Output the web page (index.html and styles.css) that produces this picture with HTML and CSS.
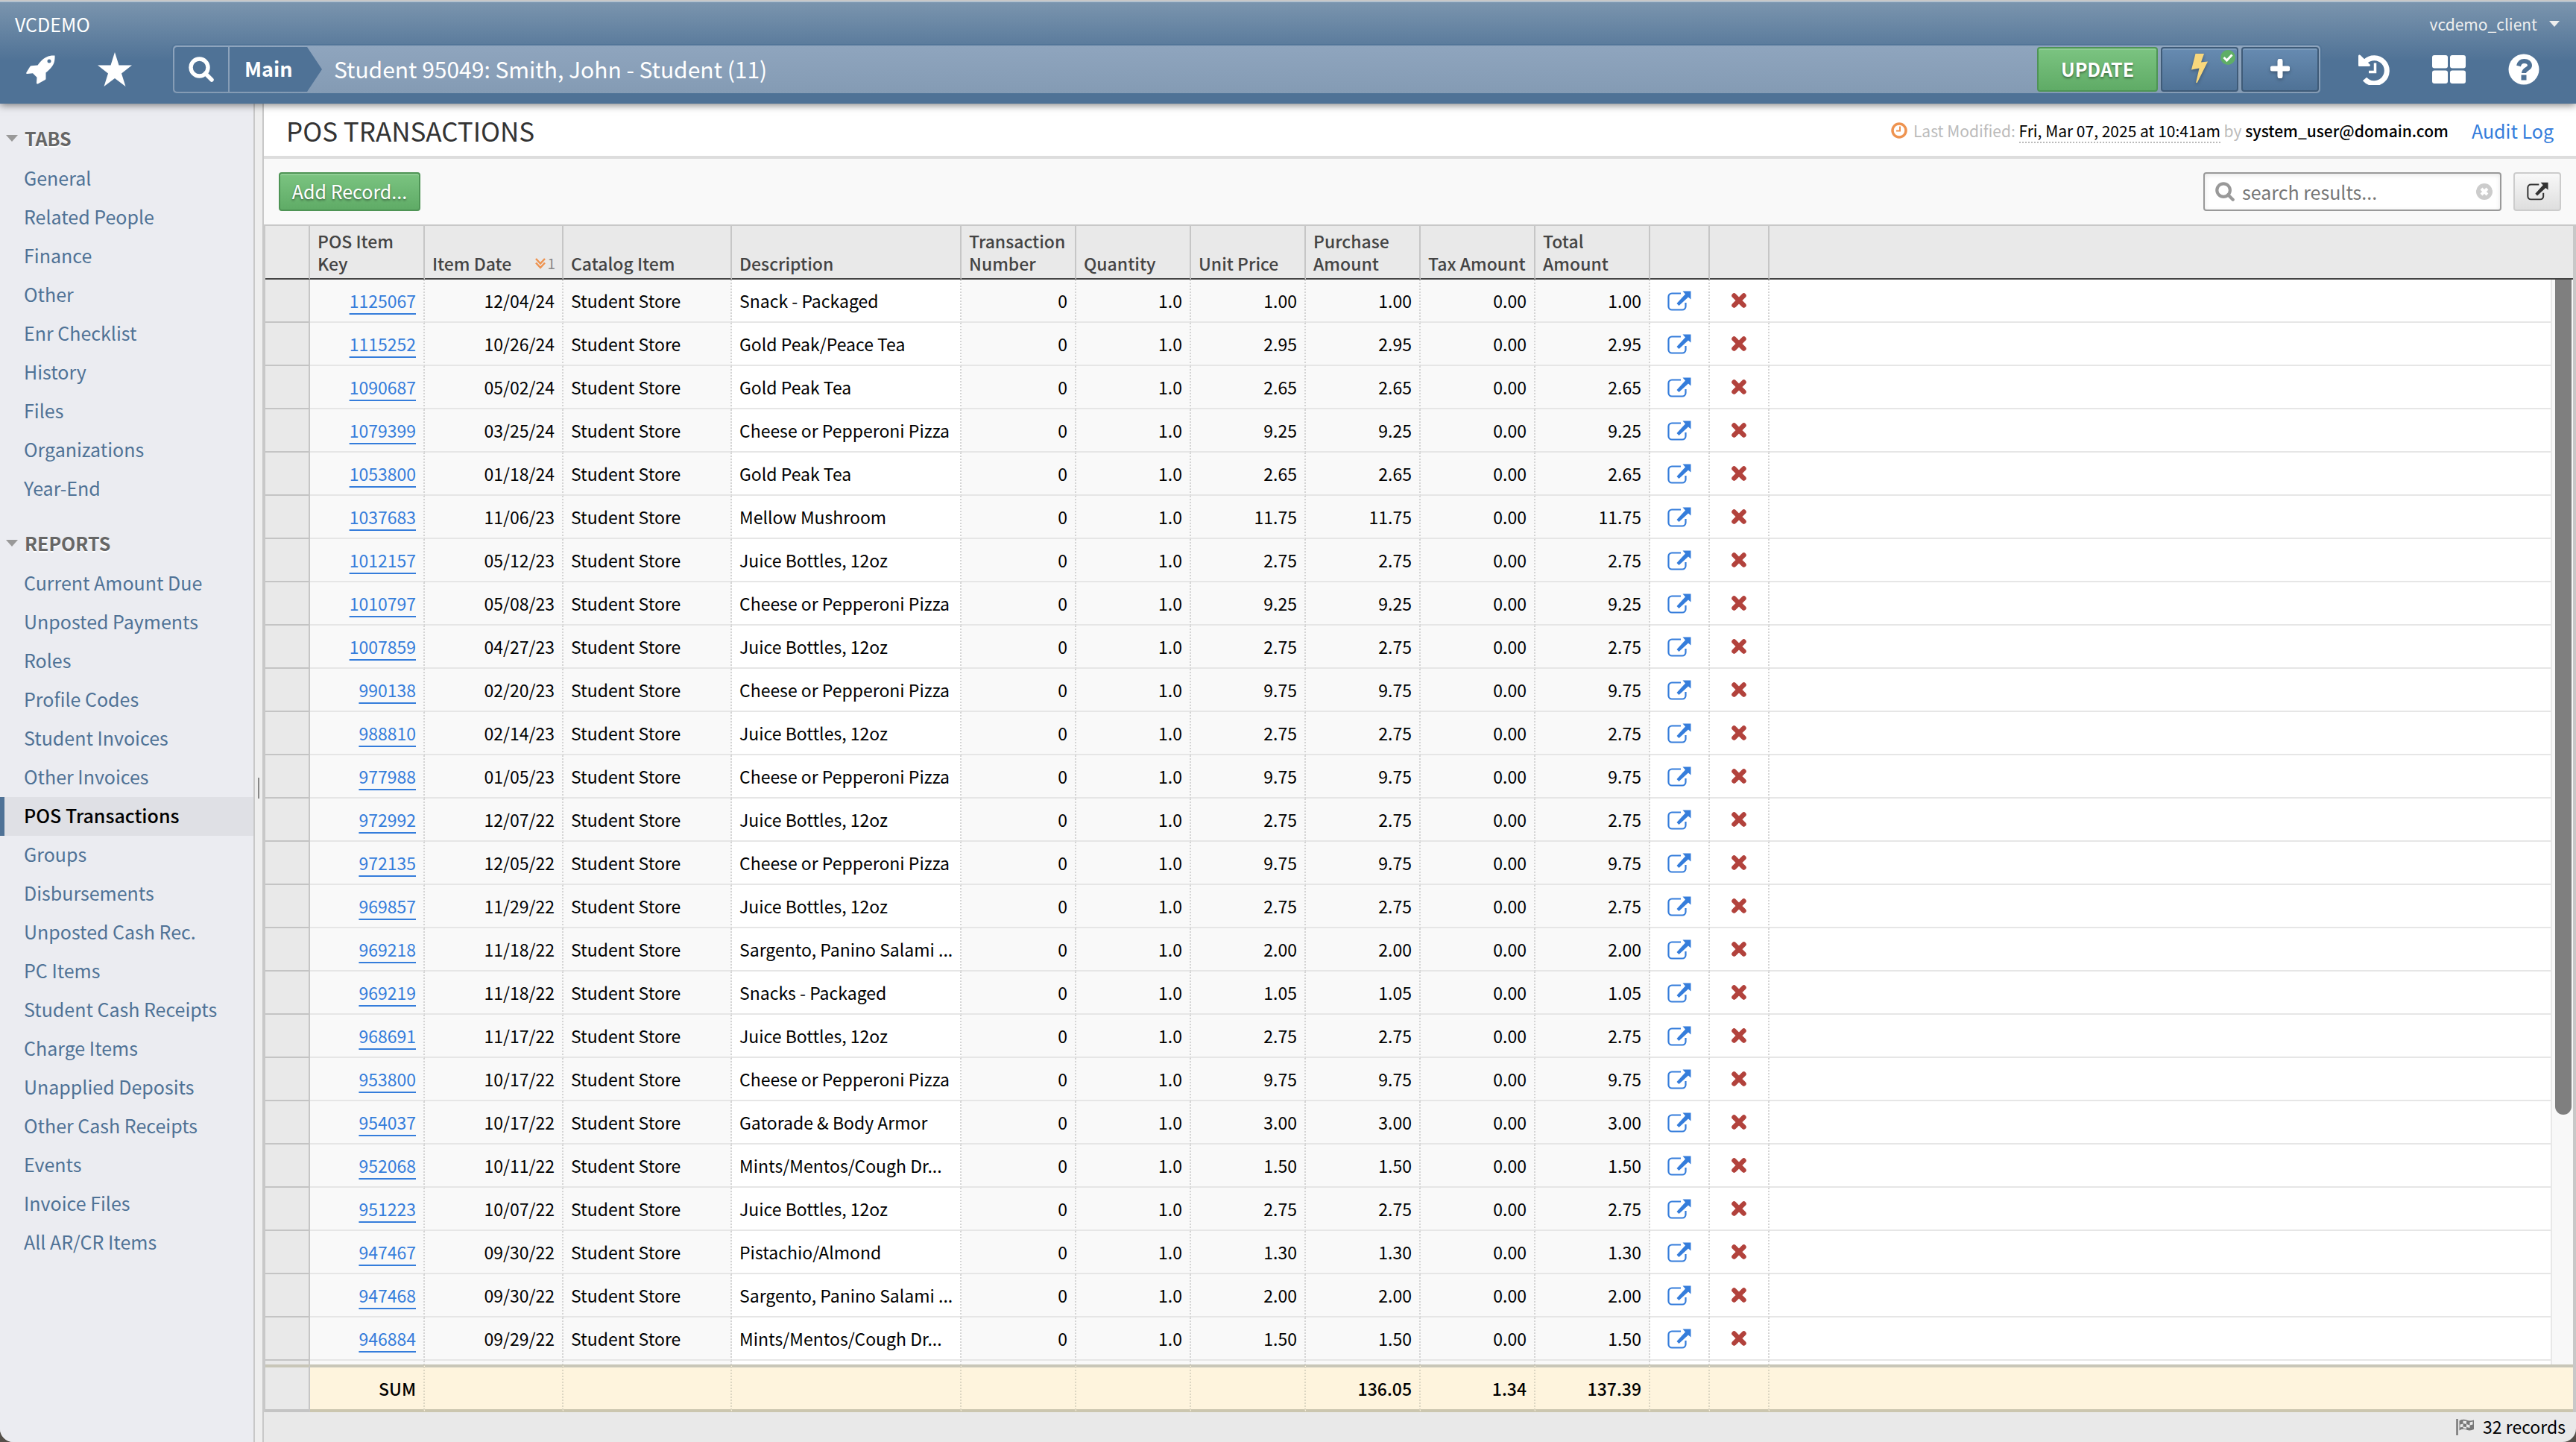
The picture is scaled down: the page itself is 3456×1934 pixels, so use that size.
FILE: index.html
```html
<!DOCTYPE html>
<html lang="en">
<head>
  <meta charset="UTF-8">
  <meta name="viewport" content="width=device-width, initial-scale=1.0">
  <title>POS Transactions - VCDEMO</title>
  <link rel="stylesheet" href="styles.css">
</head>
<body>
  <svg class="sprite" aria-hidden="true">
    <symbol id="icon-external" viewBox="0 0 32 27">
      <path d="M18 3.500H6a4.500 4.500 0 0 0-4.500 4.500v13A4.500 4.500 0 0 0 6 25.500h14a4.500 4.500 0 0 0 4.500-4.500v-5" fill="none" stroke="currentColor" stroke-width="2.200"/>
      <path d="M20.500 0.500H31.500V11.500L28 8.500L15.500 20L12.500 17L24 4.500z" fill="currentColor"/>
    </symbol>
    <symbol id="icon-search" viewBox="0 0 34 34">
      <circle cx="14.500" cy="14.500" r="11.500" fill="none" stroke="currentColor" stroke-width="5.500"/>
      <path d="M22.500 22.500L31 31" stroke="currentColor" stroke-width="5.500" stroke-linecap="round"/>
    </symbol>
    <symbol id="icon-delete" viewBox="0 0 20 20">
      <path d="M3.500 3.500L16.500 16.500M16.500 3.500L3.500 16.500" stroke="currentColor" stroke-width="6.500" stroke-linecap="round"/>
    </symbol>
  </svg>

  <div class="app">
    <header class="header">
      <div class="header-top">
        <span>VCDEMO</span>
        <button type="button" class="user-menu">vcdemo_client <span class="caret"></span></button>
      </div>
      <div class="header-nav">
        <a href="#" class="nav-icon" aria-label="Launch">
          <svg width="39" height="39" viewBox="0 0 39 39"><path fill="#fff" fill-rule="evenodd" d="M38.500.500C31 0 25 2.500 20 8c-1.500 1.500-3 3.500-4.500 5.500L7 14.200c-1 .1-1.500.6-2 1.500L.4 23.200c-.6 1.100.1 2 1.300 1.800L9 24.300l5.500 5.500L14 37c0 1.300 1 2 2.200 1.300l9-5c.8-.5 1.300-1.200 1.300-2.100V23.500c2-1.500 4-3.200 5.500-5C37 13.500 39 8 38.500.5zM31 5.500a2.500 2.500 0 1 1 0 5a2.500 2.500 0 0 1 0-5z"/></svg>
        </a>
        <a href="#" class="nav-icon" aria-label="Favorites">
          <svg width="46" height="46" viewBox="0 0 46 46"><path fill="#fff" d="M23 0L28.500 17.500H46L32 28.500L37.500 46L23 35L8.500 46L14 28.500L0 17.500H17.500z"/></svg>
        </a>
        <nav class="crumbs">
          <a href="#" class="crumb-search" aria-label="Search"><svg width="34" height="34"><use href="#icon-search"/></svg></a>
          <a href="#" class="crumb-main">Main</a>
          <span class="crumb-title">Student 95049: Smith, John - Student (11)</span>
          <div class="crumb-actions">
            <button type="button" class="btn btn-green btn-update">UPDATE</button>
            <button type="button" class="btn btn-blue" aria-label="Actions">
              <svg width="22" height="40" viewBox="0 0 22 40"><path fill="#f8d77c" d="M5.500 0H17L13 11.500L22 10.500L8 38.500C7.500 39.500 6 39.300 6.300 38L10.500 19.500L0 21.500z"/></svg>
              <svg class="badge" width="20" height="20" viewBox="0 0 20 20"><circle cx="10" cy="10" r="10" fill="#5fae66"/><path d="M4.500 10L8.500 14L15.500 6.500" fill="none" stroke="#fff" stroke-width="3"/></svg>
            </button>
            <button type="button" class="btn btn-blue" aria-label="Add">
              <svg width="26" height="26" viewBox="0 0 26 26"><path d="M13 3v20M3 13h20" stroke="#fff" stroke-width="7" stroke-linecap="round"/></svg>
            </button>
          </div>
        </nav>
        <div class="tools">
          <a href="#" aria-label="History">
            <svg width="42" height="42" viewBox="0 0 42 42"><path d="M9.500 10.500A17 17 0 1 1 8.500 34" fill="none" stroke="#fff" stroke-width="7"/><path d="M0 3.500C0 1.500 1.800 1 3 2.300L15.500 14.500C16.500 16 15.500 17 14.500 17H1.500C.5 17 0 16.500 0 15.500z" fill="#fff"/><path d="M22.500 12.500V24.500H14" fill="none" stroke="#fff" stroke-width="3.500"/></svg>
          </a>
          <a href="#" aria-label="Apps">
            <svg width="45" height="38" viewBox="0 0 45 38" fill="#fff"><rect width="21" height="17.500" rx="3"/><rect x="24" width="21" height="17.500" rx="3"/><rect y="20.500" width="21" height="17.500" rx="3"/><rect x="24" y="20.500" width="21" height="17.500" rx="3"/></svg>
          </a>
          <a href="#" aria-label="Help">
            <svg width="42" height="42" viewBox="0 0 42 42"><circle cx="21" cy="21" r="20.500" fill="#fff"/><path d="M14 16.500C15 12 18 10 21.500 10C26 10 29 12.500 29 16C29 20.500 21 20.500 21 26" fill="none" stroke="#4f7296" stroke-width="6"/><rect x="17.500" y="28.500" width="7" height="7" fill="#4f7296"/></svg>
          </a>
        </div>
      </div>
    </header>

    <div class="main">
      <aside class="sidebar">
        <h2><span class="caret"></span>TABS</h2>
        <ul>
          <li><a href="#">General</a></li>
          <li><a href="#">Related People</a></li>
          <li><a href="#">Finance</a></li>
          <li><a href="#">Other</a></li>
          <li><a href="#">Enr Checklist</a></li>
          <li><a href="#">History</a></li>
          <li><a href="#">Files</a></li>
          <li><a href="#">Organizations</a></li>
          <li><a href="#">Year-End</a></li>
        </ul>
        <h2><span class="caret"></span>REPORTS</h2>
        <ul>
          <li><a href="#">Current Amount Due</a></li>
          <li><a href="#">Unposted Payments</a></li>
          <li><a href="#">Roles</a></li>
          <li><a href="#">Profile Codes</a></li>
          <li><a href="#">Student Invoices</a></li>
          <li><a href="#">Other Invoices</a></li>
          <li><a href="#" class="active">POS Transactions</a></li>
          <li><a href="#">Groups</a></li>
          <li><a href="#">Disbursements</a></li>
          <li><a href="#">Unposted Cash Rec.</a></li>
          <li><a href="#">PC Items</a></li>
          <li><a href="#">Student Cash Receipts</a></li>
          <li><a href="#">Charge Items</a></li>
          <li><a href="#">Unapplied Deposits</a></li>
          <li><a href="#">Other Cash Receipts</a></li>
          <li><a href="#">Events</a></li>
          <li><a href="#">Invoice Files</a></li>
          <li><a href="#">All AR/CR Items</a></li>
        </ul>
      </aside>
      <div class="splitter"><span></span></div>

      <section class="content">
        <div class="title-bar">
          <h1>POS TRANSACTIONS</h1>
          <div class="modified">
            <svg width="22" height="22" viewBox="0 0 22 22"><circle cx="11" cy="11" r="9" fill="none" stroke="#ee9350" stroke-width="3.500"/><path d="M12 5.500V11.500H7" fill="none" stroke="#ee9350" stroke-width="2"/></svg>
            <p>Last Modified: <time datetime="2025-03-07T10:41">Fri, Mar 07, 2025 at 10:41am</time> by <strong>system_user@domain.com</strong></p>
            <a href="#">Audit Log</a>
          </div>
        </div>

        <div class="toolbar">
          <button type="button" class="btn btn-green btn-add">Add Record...</button>
          <div class="toolbar-right">
            <div class="search-box">
              <svg width="26" height="26"><use href="#icon-search"/></svg>
              <input type="text" placeholder="search results..." aria-label="Search results">
              <button type="button" aria-label="Clear search">
                <svg width="22" height="22" viewBox="0 0 22 22"><circle cx="11" cy="11" r="11" fill="#ccc"/><path d="M7 7L15 15M15 7L7 15" stroke="#fff" stroke-width="4"/></svg>
              </button>
            </div>
            <button type="button" class="btn btn-grey" aria-label="Open in new window"><svg width="29" height="25"><use href="#icon-external"/></svg></button>
          </div>
        </div>

        <div class="grid">
          <div class="grid-view">
            <table>
              <colgroup>
                <col class="col-gutter"><col class="col-std"><col class="col-date"><col class="col-item"><col class="col-desc">
                <col class="col-std"><col class="col-std"><col class="col-std"><col class="col-std"><col class="col-std"><col class="col-std">
                <col class="col-icon"><col class="col-icon"><col>
              </colgroup>
              <thead>
                <tr>
                  <th></th>
                  <th>POS Item Key</th>
                  <th>
                    <div class="sorted">Item Date
                      <span class="sort"><svg width="14" height="15" viewBox="0 0 14 15"><path d="M1 1L7 7.500L13 1M1 6.500L7 13L13 6.500" fill="none" stroke="#ee9350" stroke-width="2.500"/></svg>1</span>
                    </div>
                  </th>
                  <th>Catalog Item</th>
                  <th>Description</th>
                  <th>Transaction Number</th>
                  <th>Quantity</th>
                  <th>Unit Price</th>
                  <th>Purchase Amount</th>
                  <th>Tax Amount</th>
                  <th>Total Amount</th>
                  <th></th>
                  <th></th>
                  <th></th>
                </tr>
              </thead>
              <tbody id="rows"></tbody>
              <tfoot>
                <tr>
                  <td></td><td>SUM</td><td></td><td></td><td></td><td></td><td></td><td></td>
                  <td>136.05</td><td>1.34</td><td>137.39</td><td></td><td></td><td></td>
                </tr>
              </tfoot>
            </table>
          </div>
          <div class="scrollbar"><div class="thumb"></div></div>
        </div>

        <footer class="status">
          <svg width="25" height="23" viewBox="0 0 25 23"><path d="M1.500 1V23" stroke="#777" stroke-width="2.500"/><path d="M4.500 3.500Q9 .5 14 2.500T24 2.500V15Q19 17.500 14 15.500T4.500 16.500z" fill="#777"/><path d="M9.500 3.500L14 4V8L9.500 7zM18.500 5.500L22.500 4.500V8.500L18.500 9.500zM5.500 8.500L9.500 7.500V11.500L5.500 12.500zM14 8L18.500 9.500V13L14 12zM9.500 11.500L14 12V14.500L9.500 13.500z" fill="#e9e9e9"/></svg>
          <span>32 records</span>
        </footer>
      </section>
    </div>
  </div>

  <script src="app.js"></script>
</body>
</html>
```
FILE: styles.css
```css
* {
  box-sizing: border-box;
}

body {
  font-family: "Noto Sans CJK SC", "Noto Sans", sans-serif;
  margin: 0;
  font-size: 25px;
  line-height: 30px;
  color: #000;
  background: #55504a;
}

h1, h2, p, ul {
  margin: 0;
  padding: 0;
}

a {
  color: #357ddb;
  text-decoration: none;
}

button, input {
  font: inherit;
  padding: 0;
  border: none;
  background: none;
}

button {
  cursor: pointer;
}

svg {
  display: block;
  flex: none;
}

.sprite {
  position: absolute;
  width: 0;
  height: 0;
}

.app {
  height: 100vh;
  display: flex;
  flex-direction: column;
  overflow: hidden;
  border-radius: 0 0 18px 18px;
  background: #e9e9e9;
}

/* header */
.header {
  position: relative;
  z-index: 5;
  padding-bottom: 14px;
  border-top: 2px solid #c8c8c8;
  background: linear-gradient(#7b95ae, #4f7296 80px);
  box-shadow: inset 0 1px 0 #a3bcd3, 0 2px 10px rgba(0, 0, 0, 0.5);
  color: #fff;
}

.header-top {
  display: flex;
  justify-content: space-between;
  align-items: center;
  height: 59px;
  padding: 0 22px 0 20px;
}

.user-menu {
  display: flex;
  align-items: center;
  gap: 16px;
  font-size: 21px;
  color: #eee;
}

.caret {
  border: 7px solid transparent;
  border-top: 8px solid;
  border-bottom: none;
}

.header-nav {
  display: flex;
  align-items: center;
  height: 64px;
}

.nav-icon {
  display: flex;
  justify-content: center;
  width: 92px;
}

.nav-icon:first-child {
  width: 108px;
}

.crumbs {
  flex: 1;
  display: flex;
  align-items: center;
  height: 64px;
  margin-left: 32px;
  padding: 2px;
  border-radius: 5px;
  background: linear-gradient(#8fa5be, #849bb4);
  box-shadow: 0 0 0 2px rgba(79, 114, 150, 0.7);
}

.crumb-search,
.crumb-main {
  display: flex;
  align-items: center;
  height: 60px;
  background: #4f7296;
  color: #fff;
}

.crumb-search {
  justify-content: center;
  width: 72px;
  margin-right: 2px;
  border-radius: 4px 0 0 4px;
}

.crumb-main {
  width: 124px;
  padding: 0 0 2px 20px;
  font-size: 27px;
  font-weight: 700;
  clip-path: polygon(0 0, 104px 0, 100% 50%, 104px 100%, 0 100%);
}

.crumb-title {
  padding: 0 0 2px 16px;
  font-size: 30px;
}

.crumb-actions {
  display: flex;
  gap: 4px;
  margin-left: auto;
}

.tools {
  display: flex;
  align-items: center;
  gap: 57px;
  padding: 0 49px 0 51px;
}

.btn {
  position: relative;
  display: flex;
  justify-content: center;
  align-items: center;
  height: 52px;
  padding-bottom: 2px;
  border: 2px solid;
  border-radius: 4px;
}

.crumb-actions .btn {
  width: 104px;
  height: 60px;
}

.btn-green {
  border-color: #4e9455;
  background: linear-gradient(#7bc481, #5fab66);
  box-shadow: inset 0 2px 0 #8fcd94;
  color: #fff;
  text-shadow: 0 2px 3px rgba(0, 0, 0, 0.4);
}

.btn-blue {
  border-color: #3f5b78;
  background: linear-gradient(#678bb1, #4f7296);
  box-shadow: inset 0 2px 0 #7c9cbd;
}

.btn-blue svg {
  filter: drop-shadow(0 2px 2px rgba(0, 0, 0, 0.3));
}

.btn-blue .badge {
  position: absolute;
  top: 2px;
  right: 2px;
  filter: none;
}

.crumb-actions .btn-update {
  width: 162px;
  font-weight: 700;
}

.btn-add {
  width: 190px;
}

.btn-grey {
  width: 64px;
  border-color: #ccc;
  background: linear-gradient(#f8f8f8, #dedede);
  color: #333;
}

/* sidebar */
.main {
  flex: 1;
  display: flex;
  min-height: 0;
}

.sidebar {
  flex: none;
  width: 340px;
  overflow: hidden;
  background: #ebecf1;
}

.sidebar h2 {
  display: flex;
  align-items: center;
  gap: 9px;
  height: 58px;
  margin-top: 17px;
  padding-left: 8px;
  font-size: 25px;
  font-weight: 700;
  color: #666;
  text-shadow: 0 2px 0 #fff;
}

.sidebar .caret {
  color: #999;
  border-width: 9px 8px 0;
}

.sidebar ul {
  list-style: none;
}

.sidebar li a {
  display: block;
  padding: 0 0 4px 26px;
  border-left: 6px solid transparent;
  line-height: 48px;
  color: #4f7296;
}

.sidebar li a.active {
  border-left-color: #4f7296;
  background: #dfe0e5;
  color: #000;
  font-weight: 500;
}

.splitter {
  flex: none;
  display: flex;
  justify-content: center;
  align-items: center;
  width: 14px;
  padding-top: 40px;
  border: solid #c8c8c8;
  border-width: 0 2px;
  background: #eee;
}

.splitter span {
  width: 2px;
  height: 28px;
  background: #888;
}

/* content */
.content {
  flex: 1;
  display: flex;
  flex-direction: column;
  min-width: 0;
}

.title-bar {
  display: flex;
  justify-content: space-between;
  align-items: center;
  height: 74px;
  padding: 2px 30px 0;
  border-bottom: 4px solid #ddd;
  background: #fff;
}

.title-bar h1 {
  font-size: 35px;
  font-weight: 400;
  color: #333;
}

.modified {
  display: flex;
  align-items: center;
  font-size: 21px;
  color: #bbb;
}

.modified p {
  padding: 0 31px 0 8px;
}

.modified time {
  border-bottom: 2px dotted #bbb;
  color: #000;
}

.modified strong {
  font-weight: 500;
  color: #000;
}

.modified a {
  font-size: 25px;
}

.toolbar {
  display: flex;
  justify-content: space-between;
  align-items: center;
  height: 88px;
  padding: 0 20px;
  background: #f9f9f9;
}

.toolbar-right {
  display: flex;
  gap: 16px;
}

.search-box {
  display: flex;
  align-items: center;
  gap: 10px;
  width: 400px;
  height: 52px;
  padding: 0 10px 0 14px;
  border: 2px solid #999;
  border-radius: 4px;
  background: #fff;
  box-shadow: inset 0 2px 6px rgba(0, 0, 0, 0.1);
  color: #999;
}

.search-box input {
  flex: 1;
  min-width: 0;
  outline: none;
}

.search-box input::placeholder {
  color: #777;
}

/* grid */
.grid {
  position: relative;
  flex: 1;
  min-height: 0;
  border: solid #c8c8c8;
  border-width: 2px 4px 0 2px;
}

.grid-view {
  height: 100%;
  overflow: hidden;
  background: #fff;
}

table {
  width: 100%;
  table-layout: fixed;
  border-collapse: separate;
  border-spacing: 0;
  font-size: 23px;
}

.col-gutter { width: 60px; }
.col-std { width: 154px; }
.col-date { width: 186px; }
.col-item { width: 226px; }
.col-desc { width: 308px; }
.col-icon { width: 80px; }

th {
  height: 72px;
  padding: 0 0 5px 10px;
  border-right: 2px solid #c6c6c6;
  border-bottom: 2px solid #444;
  background: #e9e9e9;
  text-align: left;
  vertical-align: bottom;
  font-weight: 500;
  color: #444;
}

.sorted {
  display: flex;
  justify-content: space-between;
}

.sort {
  display: flex;
  align-items: center;
  gap: 2px;
  padding-right: 9px;
  font-size: 19px;
  font-weight: 400;
  color: #888;
}

td {
  height: 58px;
  padding: 0 10px;
  border-right: 2px dotted #d4d4d4;
  border-bottom: 2px solid #e6e6e6;
  background: #f9f9f9;
  text-align: right;
  white-space: nowrap;
}

td:nth-child(4),
td:nth-child(5) {
  text-align: left;
}

td:nth-child(5) {
  padding-right: 4px;
}

td:nth-child(5),
td:nth-child(n+12) {
  background: #fff;
}

td:first-child {
  border-right: 2px solid #c6c6c6;
  border-bottom-color: #c4c4c4;
  background: #e9e9e9;
}

th:last-child,
td:last-child {
  border-right: none;
}

td a {
  text-decoration: underline;
  text-decoration-thickness: 2px;
  text-underline-offset: 7px;
}

td button {
  display: block;
  margin: auto;
  color: #357ddb;
}

td .delete {
  color: #b2423c;
}

tfoot td {
  position: sticky;
  bottom: 0;
  height: 64px;
  border-top: 4px solid #c8c6b8;
  border-bottom: 4px solid #cbc6af;
  border-right-color: #dcd6c2;
  font-weight: 500;
}

tfoot td:not(:first-child) {
  background: #fef4dd;
}

.scrollbar {
  position: absolute;
  top: 72px;
  right: 0;
  bottom: 64px;
  width: 30px;
  padding: 0 2px 0 4px;
  border-left: 2px solid #e8e8e8;
  background: #f8f8f8;
}

.thumb {
  height: 77%;
  border-radius: 0 0 11px 11px;
  background: #7f7f7f;
}

.status {
  display: flex;
  justify-content: flex-end;
  align-items: center;
  gap: 11px;
  height: 40px;
  padding: 0 14px 2px 0;
  font-size: 23px;
}
```
FILE: app.js
```javascript
// key, date, description, unit price
const items = [
  ['1125067', '12/04/24', 'Snack - Packaged', '1.00'],
  ['1115252', '10/26/24', 'Gold Peak/Peace Tea', '2.95'],
  ['1090687', '05/02/24', 'Gold Peak Tea', '2.65'],
  ['1079399', '03/25/24', 'Cheese or Pepperoni Pizza', '9.25'],
  ['1053800', '01/18/24', 'Gold Peak Tea', '2.65'],
  ['1037683', '11/06/23', 'Mellow Mushroom', '11.75'],
  ['1012157', '05/12/23', 'Juice Bottles, 12oz', '2.75'],
  ['1010797', '05/08/23', 'Cheese or Pepperoni Pizza', '9.25'],
  ['1007859', '04/27/23', 'Juice Bottles, 12oz', '2.75'],
  ['990138', '02/20/23', 'Cheese or Pepperoni Pizza', '9.75'],
  ['988810', '02/14/23', 'Juice Bottles, 12oz', '2.75'],
  ['977988', '01/05/23', 'Cheese or Pepperoni Pizza', '9.75'],
  ['972992', '12/07/22', 'Juice Bottles, 12oz', '2.75'],
  ['972135', '12/05/22', 'Cheese or Pepperoni Pizza', '9.75'],
  ['969857', '11/29/22', 'Juice Bottles, 12oz', '2.75'],
  ['969218', '11/18/22', 'Sargento, Panino Salami ...', '2.00'],
  ['969219', '11/18/22', 'Snacks - Packaged', '1.05'],
  ['968691', '11/17/22', 'Juice Bottles, 12oz', '2.75'],
  ['953800', '10/17/22', 'Cheese or Pepperoni Pizza', '9.75'],
  ['954037', '10/17/22', 'Gatorade & Body Armor', '3.00'],
  ['952068', '10/11/22', 'Mints/Mentos/Cough Dr...', '1.50'],
  ['951223', '10/07/22', 'Juice Bottles, 12oz', '2.75'],
  ['947467', '09/30/22', 'Pistachio/Almond', '1.30'],
  ['947468', '09/30/22', 'Sargento, Panino Salami ...', '2.00'],
  ['946884', '09/29/22', 'Mints/Mentos/Cough Dr...', '1.50']
];

const rows = items.map(([key, date, description, price]) => `
  <tr>
    <td></td>
    <td><a href="#">${key}</a></td>
    <td>${date}</td>
    <td>Student Store</td>
    <td>${description.replace('&', '&amp;')}</td>
    <td>0</td>
    <td>1.0</td>
    <td>${price}</td>
    <td>${price}</td>
    <td>0.00</td>
    <td>${price}</td>
    <td><button type="button" aria-label="Open"><svg width="32" height="27"><use href="#icon-external"/></svg></button></td>
    <td><button type="button" class="delete" aria-label="Delete"><svg width="20" height="20"><use href="#icon-delete"/></svg></button></td>
    <td></td>
  </tr>`);

rows.push('<tr>' + '<td></td>'.repeat(14) + '</tr>');

document.getElementById('rows').innerHTML = rows.join('');
```
